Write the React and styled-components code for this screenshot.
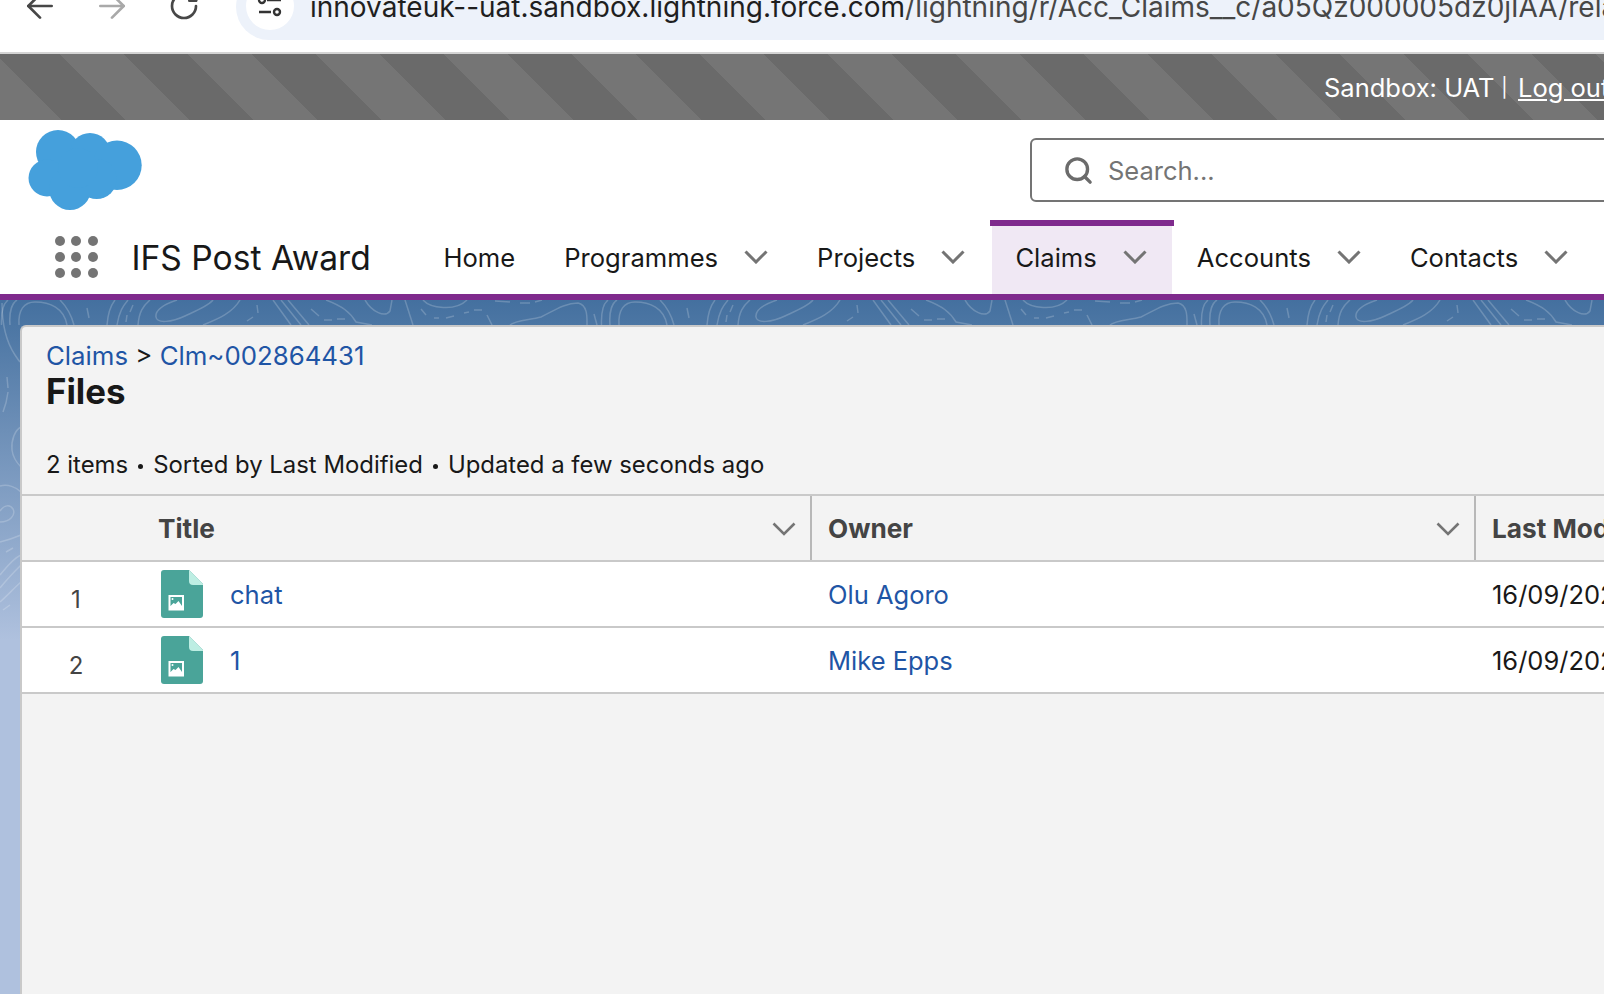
import React from 'react';
import styled, { createGlobalStyle } from 'styled-components';
import { ArrowLeft, ArrowRight, RotateCw, Search } from 'lucide-react';

const GlobalStyle = createGlobalStyle`
  html, body {
    margin: 0;
    height: 100%;
    overflow: hidden;
    background: #fff;
  }
  body {
    font-family: Inter, "Liberation Sans", sans-serif;
    color: #181818;
  }
`;

const Page = styled.div`
  width: 1604px;
  height: 994px;
  display: flex;
  flex-direction: column;
  overflow: hidden;
`;

const BrowserBar = styled.div`
  height: 52px;
  flex: none;
  display: flex;
  align-items: flex-end;
  overflow: hidden;
  border-bottom: 2px solid #d4d4d4;
  background: #fff;
`;

const NavIcons = styled.div`
  display: grid;
  grid-template-columns: repeat(3, 72px);
  justify-items: center;
  align-items: center;
  padding-left: 4px;
  margin-bottom: 26px;
  width: 220px;
  height: 40px;
  flex: none;
  box-sizing: border-box;
`;

const NavIcon = styled.span`
  display: flex;
  color: ${p => (p.$muted ? '#a9a9a9' : '#474747')};
`;

const AddressPill = styled.div`
  flex: 1;
  height: 66px;
  margin: 0 -60px 12px 16px;
  display: flex;
  align-items: center;
  background: #edf2fa;
  border-radius: 34px 0 0 34px;
  padding-left: 10px;
  font-size: 28px;
  white-space: nowrap;
  overflow: hidden;
  color: #1f1f1f;
`;

const SiteBadge = styled.span`
  width: 48px;
  height: 48px;
  flex: none;
  border-radius: 50%;
  background: #fff;
  display: flex;
  align-items: center;
  justify-content: center;
  margin: -2px 16px 0 0;
`;

const UrlPath = styled.span`
  color: #474747;
`;

const SandboxBar = styled.div`
  height: 66px;
  flex: none;
  display: flex;
  align-items: center;
  justify-content: flex-start;
  padding-left: 1324px;
  box-sizing: border-box;
  white-space: nowrap;
  color: #fff;
  font-size: 25.5px;
  background: repeating-linear-gradient(
    45deg,
    #757575 -1.5px,
    #757575 43.75px,
    #6a6a6a 43.75px,
    #6a6a6a 89px
  );
`;

const Pipe = styled.span`
  width: 20px;
  margin-right: 3.5px;
  text-align: center;
  font-size: 19px;
  flex: none;
`;

const LogOut = styled.a`
  color: #fff;
  text-decoration: underline;
`;

const Header = styled.header`
  height: 180px;
  flex: none;
  background: #fff;
  border-bottom: 6px solid #7f2a8d;
  box-sizing: border-box;
  display: flex;
  flex-direction: column;
`;

const TopRow = styled.div`
  height: 100px;
  flex: none;
  display: flex;
  padding-left: 28px;
`;

const Cloud = styled.svg`
  width: 115px;
  height: 80px;
  margin-top: 10px;
  flex: none;
`;

const SearchBox = styled.div`
  margin: 18px 0 0 887px;
  width: 700px;
  height: 64px;
  box-sizing: border-box;
  border: 2px solid #747474;
  border-radius: 6px;
  display: flex;
  align-items: center;
  gap: 14px;
  padding: 1px 0 0 31px;
  font-size: 25.5px;
  color: #747474;
  flex: none;
`;

const SearchGlyph = styled(Search)`
  color: #6b6b6b;
  flex: none;
`;

const NavRow = styled.nav`
  flex: 1;
  display: flex;
  align-items: stretch;
  padding-left: 55px;
`;

const Waffle = styled.div`
  display: grid;
  grid-template-columns: repeat(3, 10px);
  grid-auto-rows: 10px;
  gap: 6.25px;
  align-self: center;
  flex: none;
`;

const Dot = styled.span`
  border-radius: 50%;
  background: #747474;
`;

const AppName = styled.div`
  font-size: 33.6px;
  margin-left: 34px;
  width: 287.5px;
  flex: none;
  align-self: center;
  white-space: nowrap;
`;

const Tab = styled.div`
  position: relative;
  display: flex;
  align-items: center;
  gap: 26px;
  padding: 0 24.5px 6px;
  font-size: 25.6px;
  border-top: 6px solid transparent;
  background: ${p => (p.$active ? '#f0e8f4' : 'transparent')};
  background-clip: padding-box;
  white-space: nowrap;
  flex: none;
  color: #181818;
  ${p => p.$active && `
    margin-left: 2px;
    padding-left: 23.5px;
    padding-right: 25.5px;
    &::before {
      content: '';
      position: absolute;
      top: -6px;
      left: -2px;
      right: -2px;
      height: 6px;
      background: #7f2a8d;
    }
  `}
`;

const ChevronGlyph = styled.svg`
  width: 24px;
  height: 14px;
  flex: none;
  fill: none;
  stroke: #747474;
  stroke-width: ${p => p.$weight};
`;

const Chevron = ({ weight = 3 }) => (
  <ChevronGlyph viewBox="0 0 24 14" $weight={weight}>
    <path d="M1.5 1.5L12 12L22.5 1.5" />
  </ChevronGlyph>
);

const Body = styled.main`
  position: relative;
  flex: 1;
  min-height: 0;
  padding: 25px 0 0 20px;
  display: flex;
  background: linear-gradient(#44709f 0, #afc1de 340px);
  overflow: hidden;
`;

const Topo = styled.svg`
  position: absolute;
  left: 0;
  top: 0;
  width: 1604px;
  height: 694px;
  fill: none;
  stroke: rgba(255, 255, 255, 0.2);
  stroke-width: 1.5;
`;

const Panel = styled.section`
  position: relative;
  flex: 1;
  background: #f3f3f3;
  border-radius: 6px 0 0 0;
  border: 2px solid #c9c9c9;
  border-width: 2px 0 0 2px;
  display: flex;
  flex-direction: column;
`;

const PanelHead = styled.div`
  height: 167px;
  flex: none;
  box-sizing: border-box;
  padding: 13px 0 0 24px;
  display: flex;
  flex-direction: column;
`;

const Crumbs = styled.div`
  font-size: 25.8px;
  line-height: 31px;
  color: #181818;
`;

const BlueLink = styled.a`
  color: #1f55a5;
`;

const PageTitle = styled.h1`
  font-size: 34.8px;
  line-height: 40px;
  font-weight: 700;
  margin: 0;
  color: #181818;
`;

const Meta = styled.div`
  display: flex;
  align-items: center;
  font-size: 23.9px;
  line-height: 28px;
  margin-top: 40px;
  color: #181818;
  white-space: nowrap;
`;

const MetaDot = styled.span`
  width: 5px;
  height: 5px;
  border-radius: 50%;
  background: #181818;
  margin: 2px 10px 0;
  flex: none;
`;

const Row = styled.div`
  display: grid;
  grid-template-columns: 120px 670px 664px 1fr;
  height: 66px;
  box-sizing: border-box;
  border-top: 2px solid #c9c9c9;
  background: ${p => (p.$head ? '#f3f3f3' : '#fff')};
  ${p => p.$last && 'border-bottom: 2px solid #c9c9c9; height: 68px;'}
`;

const HeadCell = styled.div`
  display: flex;
  align-items: center;
  justify-content: space-between;
  padding: 1px 14px 0 16px;
  font-size: 26.2px;
  font-weight: 700;
  color: #444;
  border-right: ${p => (p.$sep ? '2px solid #b8b8b8' : 'none')};
  white-space: nowrap;
  overflow: hidden;
`;

const NumCell = styled.div`
  display: flex;
  align-items: center;
  justify-content: center;
  font-size: 24px;
  color: #444;
  padding-top: 11px;
  box-sizing: border-box;
  margin-left: -12px;
`;

const TitleCell = styled.div`
  display: flex;
  align-items: center;
  gap: 27px;
  padding-left: 19px;
  font-size: 25.6px;
`;

const Cell = styled.div`
  display: flex;
  align-items: center;
  padding: 1px 0 0 16px;
  font-size: 25.5px;
  white-space: nowrap;
  overflow: hidden;
`;

const FileGlyph = styled.svg`
  width: 42px;
  height: 48px;
  flex: none;
`;

const FileIcon = () => (
  <FileGlyph viewBox="0 0 42 48">
    <path d="M3 0h25l14 14v31a3 3 0 0 1-3 3H3a3 3 0 0 1-3-3V3a3 3 0 0 1 3-3z" fill="#4aa499" />
    <path d="M28 0l14 14v1H32a4 4 0 0 1-4-4z" fill="#bdeee3" />
    <rect x="7.5" y="25" width="15.5" height="15.5" fill="#fff" />
    <path d="M9.5 27h11.5v9H9.5z" fill="#4aa499" />
    <path d="M9.5 36l3-3 2 1 3-3 3.5 5z" fill="#fff" />
    <circle cx="11.5" cy="29" r="1" fill="#fff" />
  </FileGlyph>
);

// one 600px wide tile of the contour lines along the top band
const TopoTile = ({ x }) => (
  <g transform={`translate(${x} 0)`}>
    <path d="M1.5 25C1 12 3 4 8 0" />
    <path d="M10 25C9 12 12 3 17 0" />
    <path d="M19 25C18 10 24 2 35 2C50 2 64 8 67 25" />
    <path d="M60 0C66 6 71 14 74 25" />
    <path d="M87 8L89 18" />
    <path d="M107 25C108 12 111 5 115 0" />
    <path d="M117 25C119 12 123 6 128 0" />
    <path d="M126 22L127 15M130 12L133 5" />
    <path d="M138 25C139 12 143 6 150 0" />
    <path d="M177 0C165 4 155 10 156 17C157 24 172 22 185 16C198 10 208 6 213 0" />
    <path d="M203 25C215 20 232 14 240 0" />
    <path d="M247 21L253 17M257 5L258 13" />
    <path d="M273 0L291 25M281 0L301 25M288 0L309 25" />
    <path d="M311 9L319 16M324 20L332 20M337 19L345 19" />
    <path d="M326 0C342 6 350 12 356 22L372 25" />
    <path d="M365 0C372 12 385 18 390 11L392 0" />
    <path d="M405 0L413 25" />
    <path d="M423 0C430 8 455 12 467 0" />
    <path d="M421 9L426 15M434 18L439 18M446 18L454 16M464 13L469 12M474 10L482 10" />
    <path d="M487 15L492 25" />
    <path d="M495 1L510 2M520 3L530 3M535 2L542 0" />
    <path d="M510 25C515 20 530 20 541 17C555 10 565 3 578 3C588 5 587 18 587 25" />
    <path d="M594 14L597 25" />
  </g>
);

const tabs = [
  { label: 'Home' },
  { label: 'Programmes', menu: true },
  { label: 'Projects', menu: true },
  { label: 'Claims', menu: true, active: true },
  { label: 'Accounts', menu: true },
  { label: 'Contacts', menu: true },
];

const files = [
  { n: 1, title: 'chat', owner: 'Olu Agoro' },
  { n: 2, title: '1', owner: 'Mike Epps' },
];

export default function App() {
  return (
    <Page>
      <GlobalStyle />
      <BrowserBar>
        <NavIcons>
          <NavIcon><ArrowLeft size={40} strokeWidth={1.6} /></NavIcon>
          <NavIcon $muted><ArrowRight size={40} strokeWidth={1.6} /></NavIcon>
          <NavIcon><RotateCw size={32} strokeWidth={2} /></NavIcon>
        </NavIcons>
        <AddressPill>
          <SiteBadge>
            <svg width="26" height="26" viewBox="0 0 26 26" fill="none" stroke="#333" strokeWidth="2.4">
              <path d="M10 7h14M2 19h12" />
              <circle cx="5" cy="7" r="3" />
              <circle cx="20" cy="19" r="3" />
            </svg>
          </SiteBadge>
          innovateuk--uat.sandbox.lightning.force.com
          <UrlPath>/lightning/r/Acc_Claims__c/a05Qz000005dz0jIAA/related/AttachedContentDocuments/view</UrlPath>
        </AddressPill>
      </BrowserBar>
      <SandboxBar>
        Sandbox: UAT<Pipe>|</Pipe><LogOut>Log out</LogOut>
      </SandboxBar>
      <Header>
        <TopRow>
          <Cloud viewBox="0 0 115 80">
            <g fill="#45a0dc">
              <circle cx="30" cy="22" r="22" />
              <circle cx="62" cy="23" r="20" />
              <circle cx="89" cy="35.3" r="24.7" />
              <circle cx="19" cy="48" r="18.5" />
              <circle cx="42" cy="59" r="21" />
              <circle cx="68.7" cy="49" r="20" />
              <circle cx="50" cy="38" r="20" />
            </g>
          </Cloud>
          <SearchBox>
            <SearchGlyph size={31} strokeWidth={2.6} />
            Search...
          </SearchBox>
        </TopRow>
        <NavRow>
          <Waffle>
            {Array.from({ length: 9 }).map((_, i) => <Dot key={i} />)}
          </Waffle>
          <AppName>IFS Post Award</AppName>
          {tabs.map(t => (
            <Tab key={t.label} $active={t.active}>
              {t.label}
              {t.menu && <Chevron />}
            </Tab>
          ))}
        </NavRow>
      </Header>
      <Body>
        <Topo viewBox="0 0 1604 694">
          <TopoTile x={0} />
          <TopoTile x={600} />
          <TopoTile x={1200} />
          <path d="M2 3C2 20 5 40 15 55C17 58 19 61 20 62" />
          <path d="M7 77L8 88M8 92C7 100 5 107 3 112" />
          <path d="M21 127C15 130 11 140 12 150C13 158 17 163 21 167" />
          <path d="M0 186C8 184 16 187 21 192" />
          <path d="M0 211C4 205 10 204 13 209C16 215 10 222 0 222" />
          <path d="M0 242C8 240 14 238 21 235" />
          <path d="M6 252L13 248" />
          <path d="M0 275C8 265 14 258 21 255" />
          <path d="M0 288C8 278 14 272 21 265" />
          <path d="M0 302C8 295 14 288 21 282" />
          <path d="M3 310L10 305" />
        </Topo>
        <Panel>
          <PanelHead>
            <Crumbs>
              <BlueLink>Claims</BlueLink> &gt; <BlueLink>Clm~002864431</BlueLink>
            </Crumbs>
            <PageTitle>Files</PageTitle>
            <Meta>
              2 items<MetaDot />Sorted by Last Modified<MetaDot />Updated a few seconds ago
            </Meta>
          </PanelHead>
          <Row $head>
            <HeadCell />
            <HeadCell $sep>Title<Chevron weight={2.6} /></HeadCell>
            <HeadCell $sep>Owner<Chevron weight={2.6} /></HeadCell>
            <HeadCell>Last Modified</HeadCell>
          </Row>
          {files.map((f, i) => (
            <Row key={f.n} $last={i === files.length - 1}>
              <NumCell>{f.n}</NumCell>
              <TitleCell><FileIcon /><BlueLink>{f.title}</BlueLink></TitleCell>
              <Cell><BlueLink>{f.owner}</BlueLink></Cell>
              <Cell>16/09/2025, 10:42</Cell>
            </Row>
          ))}
        </Panel>
      </Body>
    </Page>
  );
}
